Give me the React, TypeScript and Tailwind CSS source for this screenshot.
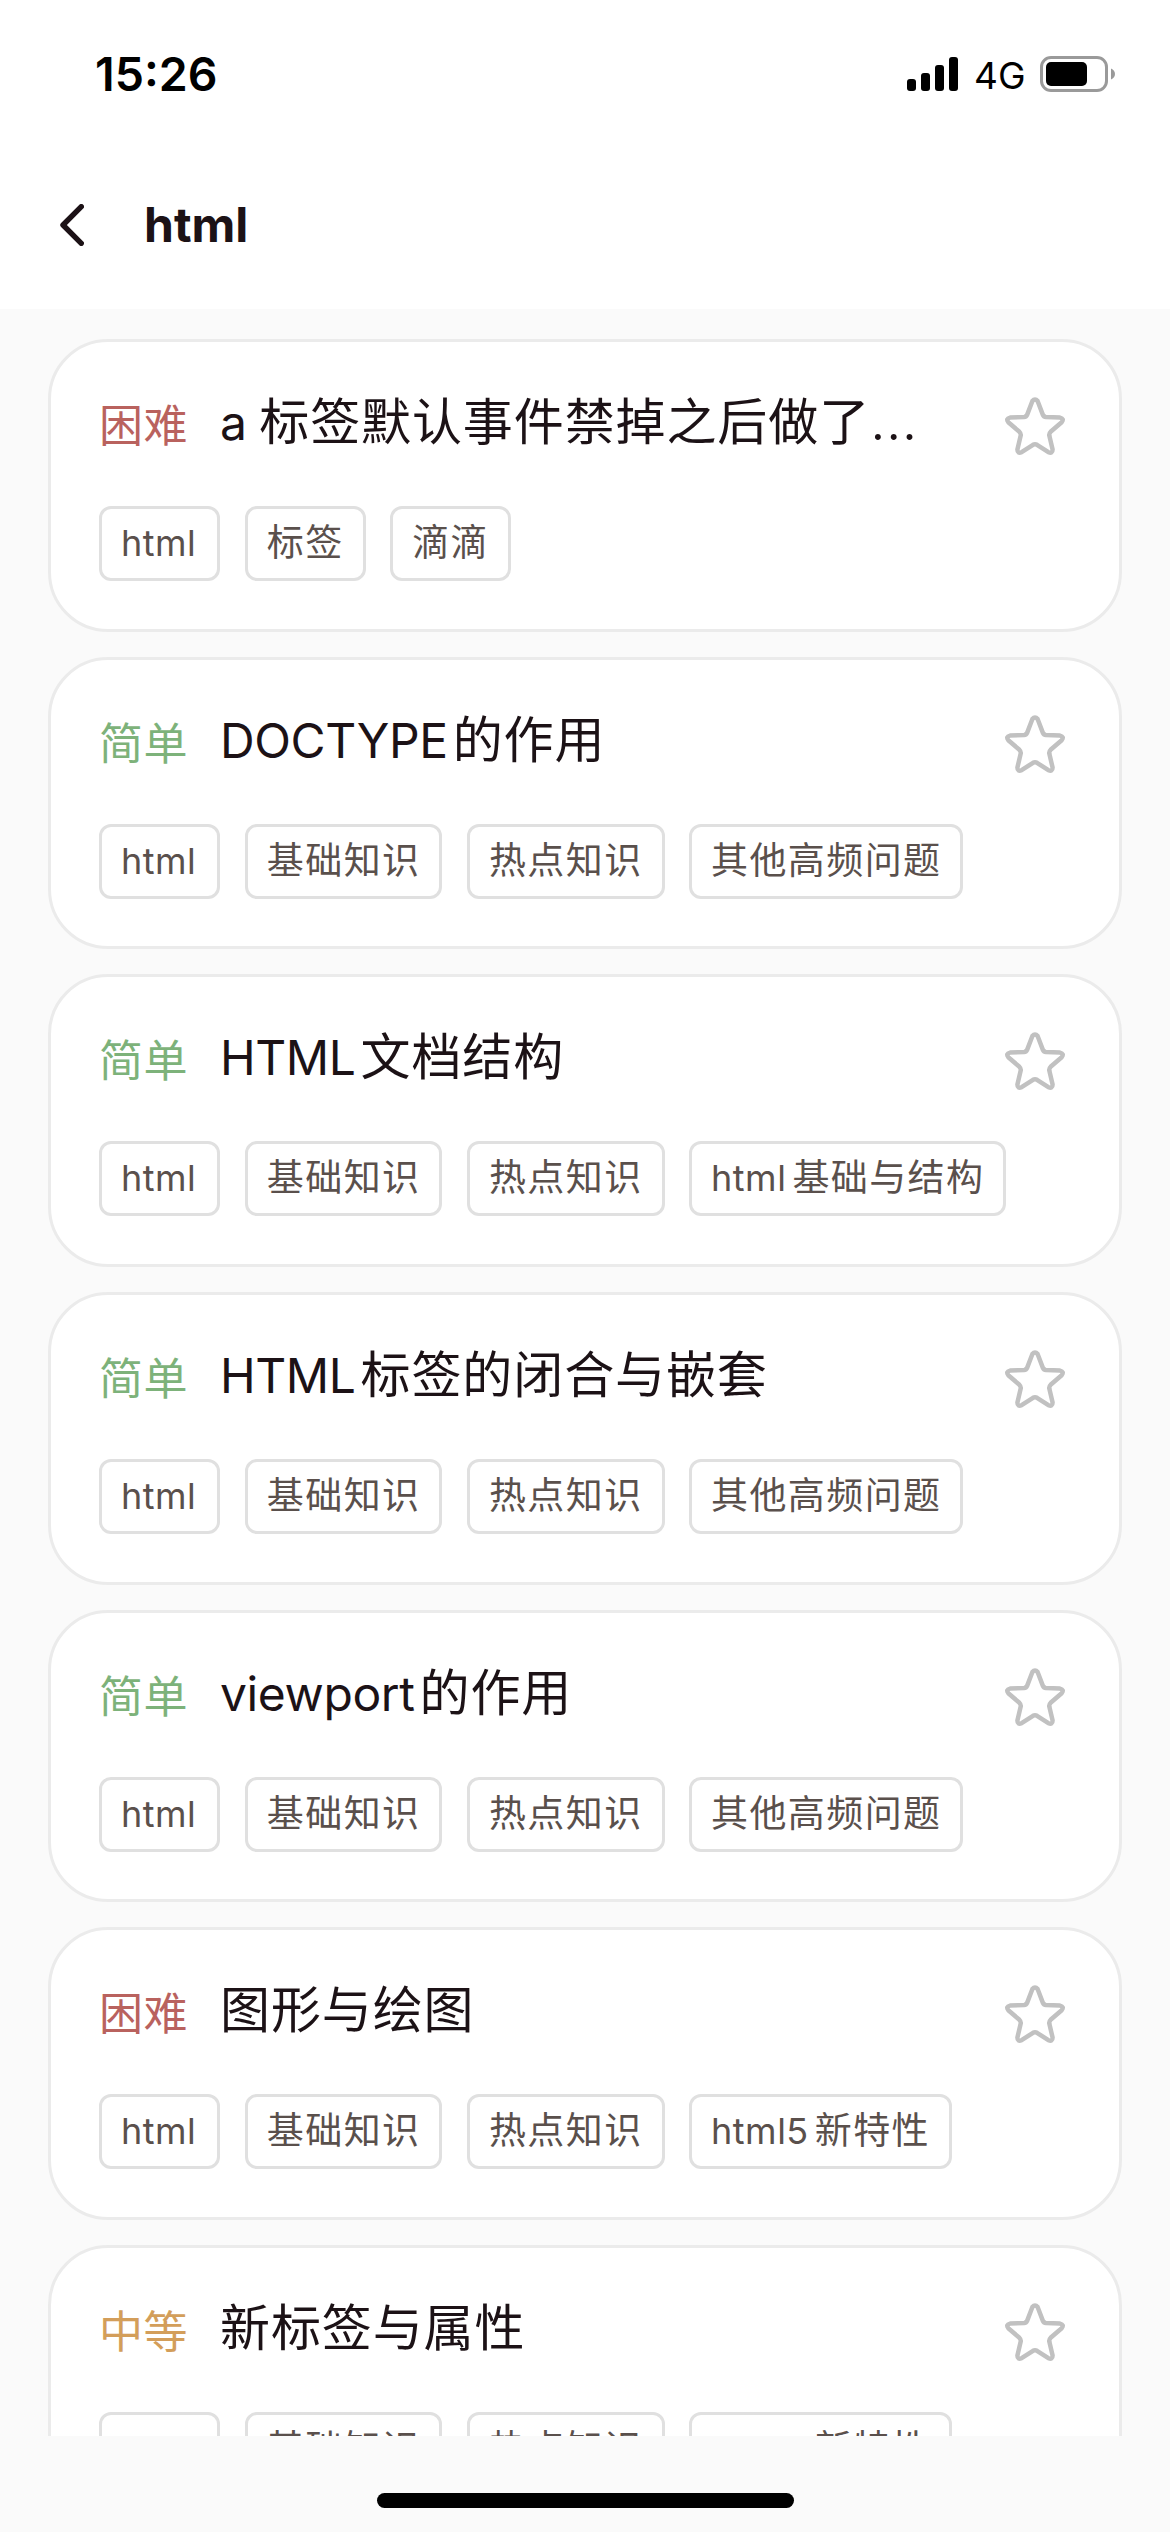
import React from "react";

type Level = "困难" | "简单" | "中等";

interface Question {
  level: Level;
  title: string;
  tags: string[];
}

const levelColors: Record<Level, string> = {
  困难: "text-[#b9625e]",
  简单: "text-[#7db27a]",
  中等: "text-[#d39e5a]",
};

const questions: Question[] = [
  { level: "困难", title: "a 标签默认事件禁掉之后做了…", tags: ["html", "标签", "滴滴"] },
  { level: "简单", title: "DOCTYPE的作用", tags: ["html", "基础知识", "热点知识", "其他高频问题"] },
  { level: "简单", title: "HTML文档结构", tags: ["html", "基础知识", "热点知识", "html基础与结构"] },
  { level: "简单", title: "HTML标签的闭合与嵌套", tags: ["html", "基础知识", "热点知识", "其他高频问题"] },
  { level: "简单", title: "viewport的作用", tags: ["html", "基础知识", "热点知识", "其他高频问题"] },
  { level: "困难", title: "图形与绘图", tags: ["html", "基础知识", "热点知识", "html5新特性"] },
  { level: "中等", title: "新标签与属性", tags: ["html", "基础知识", "热点知识", "html5新特性"] },
];

// Latin and Chinese runs use different sizes and letter spacing
const MixedText = ({ text, latin, cjk }: { text: string; latin: string; cjk: string }) => {
  const runs = text.match(/[\x20-\x7e]+|…|[^\x20-\x7e…]+/g) || [];
  return (
    <>
      {runs.map((run, i) => {
        if (run === "…") {
          return <span key={i} className="text-[56px] leading-none font-light">{run}</span>;
        }
        return (
          <span key={i} className={/^[\x20-\x7e]/.test(run) ? latin : cjk}>
            {run}
          </span>
        );
      })}
    </>
  );
};

const StatusBar = () => (
  <div className="flex h-[141px] items-start justify-between pl-[95px] pr-[55px]">
    <span className="mt-[44px] text-[46.5px] leading-[60px] font-semibold text-black">15:26</span>
    <div className="mt-[49px] flex h-[50px] items-center">
      <svg className="h-[34px] w-[51px]" viewBox="0 0 51 34">
        <rect x="0" y="22" width="9" height="12" rx="3" />
        <rect x="14" y="16" width="9" height="18" rx="3" />
        <rect x="28" y="8" width="9" height="26" rx="3" />
        <rect x="42" y="0" width="9" height="34" rx="3" />
      </svg>
      <span className="ml-[16px] w-[51px] pt-[3px] text-[37px] leading-none text-black">4G</span>
      <svg className="ml-[15px] h-[36px] w-[75px]" viewBox="0 0 75 36">
        <rect x="1.5" y="1.5" width="65" height="33" rx="9.5" fill="none" stroke="#9a9a9a" strokeWidth="3" />
        <rect x="6" y="6" width="41" height="24" rx="5" />
        <path d="M71 12.5c2.5 1 4 3 4 5.5s-1.5 4.5-4 5.5z" fill="#9a9a9a" />
      </svg>
    </div>
  </div>
);

const Header = () => (
  <div className="flex h-[168px] items-center pl-[60px]">
    <svg className="h-[42px] w-[24px]" viewBox="0 0 24 42" fill="none" stroke="#1c1216">
      <path d="M21.3 2.7L3 21l18.3 18.3" strokeWidth="5.4" strokeLinecap="round" strokeLinejoin="round" />
    </svg>
    <h1 className="ml-[60px] text-[48px] leading-[60px] font-bold">html</h1>
  </div>
);

const Star = () => (
  <svg className="mt-[54px] h-[60px] w-[62px] shrink-0" viewBox="0 0 62 60" fill="none" stroke="#c1c1c1">
    <path
      d="M28.4 5Q31 1.8 33.6 5L38.8 18.6Q39.6 20.7 42 20.9L56 21.6Q60.5 22.6 57.7 26.2L46.6 35.8Q44.9 37.4 45.3 39.6L48.6 53.6Q48.6 58 44.4 56.2L33 48.8Q31 47.6 29 48.8L17.6 56.2Q13.4 58 13.4 53.6L16.7 39.6Q17.1 37.4 15.4 35.8L4.3 26.2Q1.5 22.6 6 21.6L20 20.9Q22.4 20.7 23.2 18.6Z"
      strokeWidth="4.5"
      strokeLinejoin="round"
    />
  </svg>
);

const Tag = ({ text }: { text: string }) => (
  <span className="flex h-[75px] items-center rounded-[12px] border-3 border-[#e0e0e0] px-[19px] pb-[1px] text-[37px] leading-[50px] whitespace-pre text-[#5a504c]">
    <MixedText text={text} latin="mr-[6px] text-[36px] tracking-[0.5px] last:mr-[2px]" cjk="tracking-[1.4px]" />
  </span>
);

const Card = ({ question }: { question: Question }) => (
  <div className="h-[292.67px] shrink-0 rounded-[60px] border-3 border-[#ebebeb] bg-white pl-[48px] pr-[53px]">
    <div className="flex h-[164px] items-start justify-between">
      <div className="flex items-start">
        <span className={`w-[121px] pt-[49px] text-[44px] leading-[70px] tracking-[0.5px] ${levelColors[question.level]}`}>
          {question.level}
        </span>
        <h2 className="pt-[45px] text-[50px] leading-[70px] whitespace-pre">
          <MixedText
            text={question.title}
            latin={question.title.includes(" ") ? "text-[48px] tracking-[-0.6px]" : "mr-[5px] text-[48px] tracking-[-0.4px]"}
            cjk="tracking-[0.9px]"
          />
        </h2>
      </div>
      <Star />
    </div>
    <div className="flex gap-[24.5px]">
      {question.tags.map((tag) => (
        <Tag key={tag} text={tag} />
      ))}
    </div>
  </div>
);

const App = () => {
  return (
    <div className="flex h-[2532px] w-[1170px] flex-col overflow-hidden bg-[#fafafa] font-['Inter','Noto_Sans_CJK_SC',sans-serif] text-[#1c1216]">
      <div className="shrink-0 bg-white">
        <StatusBar />
        <Header />
      </div>
      {/* Scrolling question list */}
      <div className="flex h-[2127px] shrink-0 flex-col gap-[25px] overflow-hidden px-[48px] pt-[30px]">
        {questions.map((question) => (
          <Card key={question.title} question={question} />
        ))}
      </div>
      {/* Home indicator */}
      <div className="mx-auto mt-[57px] h-[15px] w-[417px] rounded-full bg-black" />
    </div>
  );
};

export default App;
